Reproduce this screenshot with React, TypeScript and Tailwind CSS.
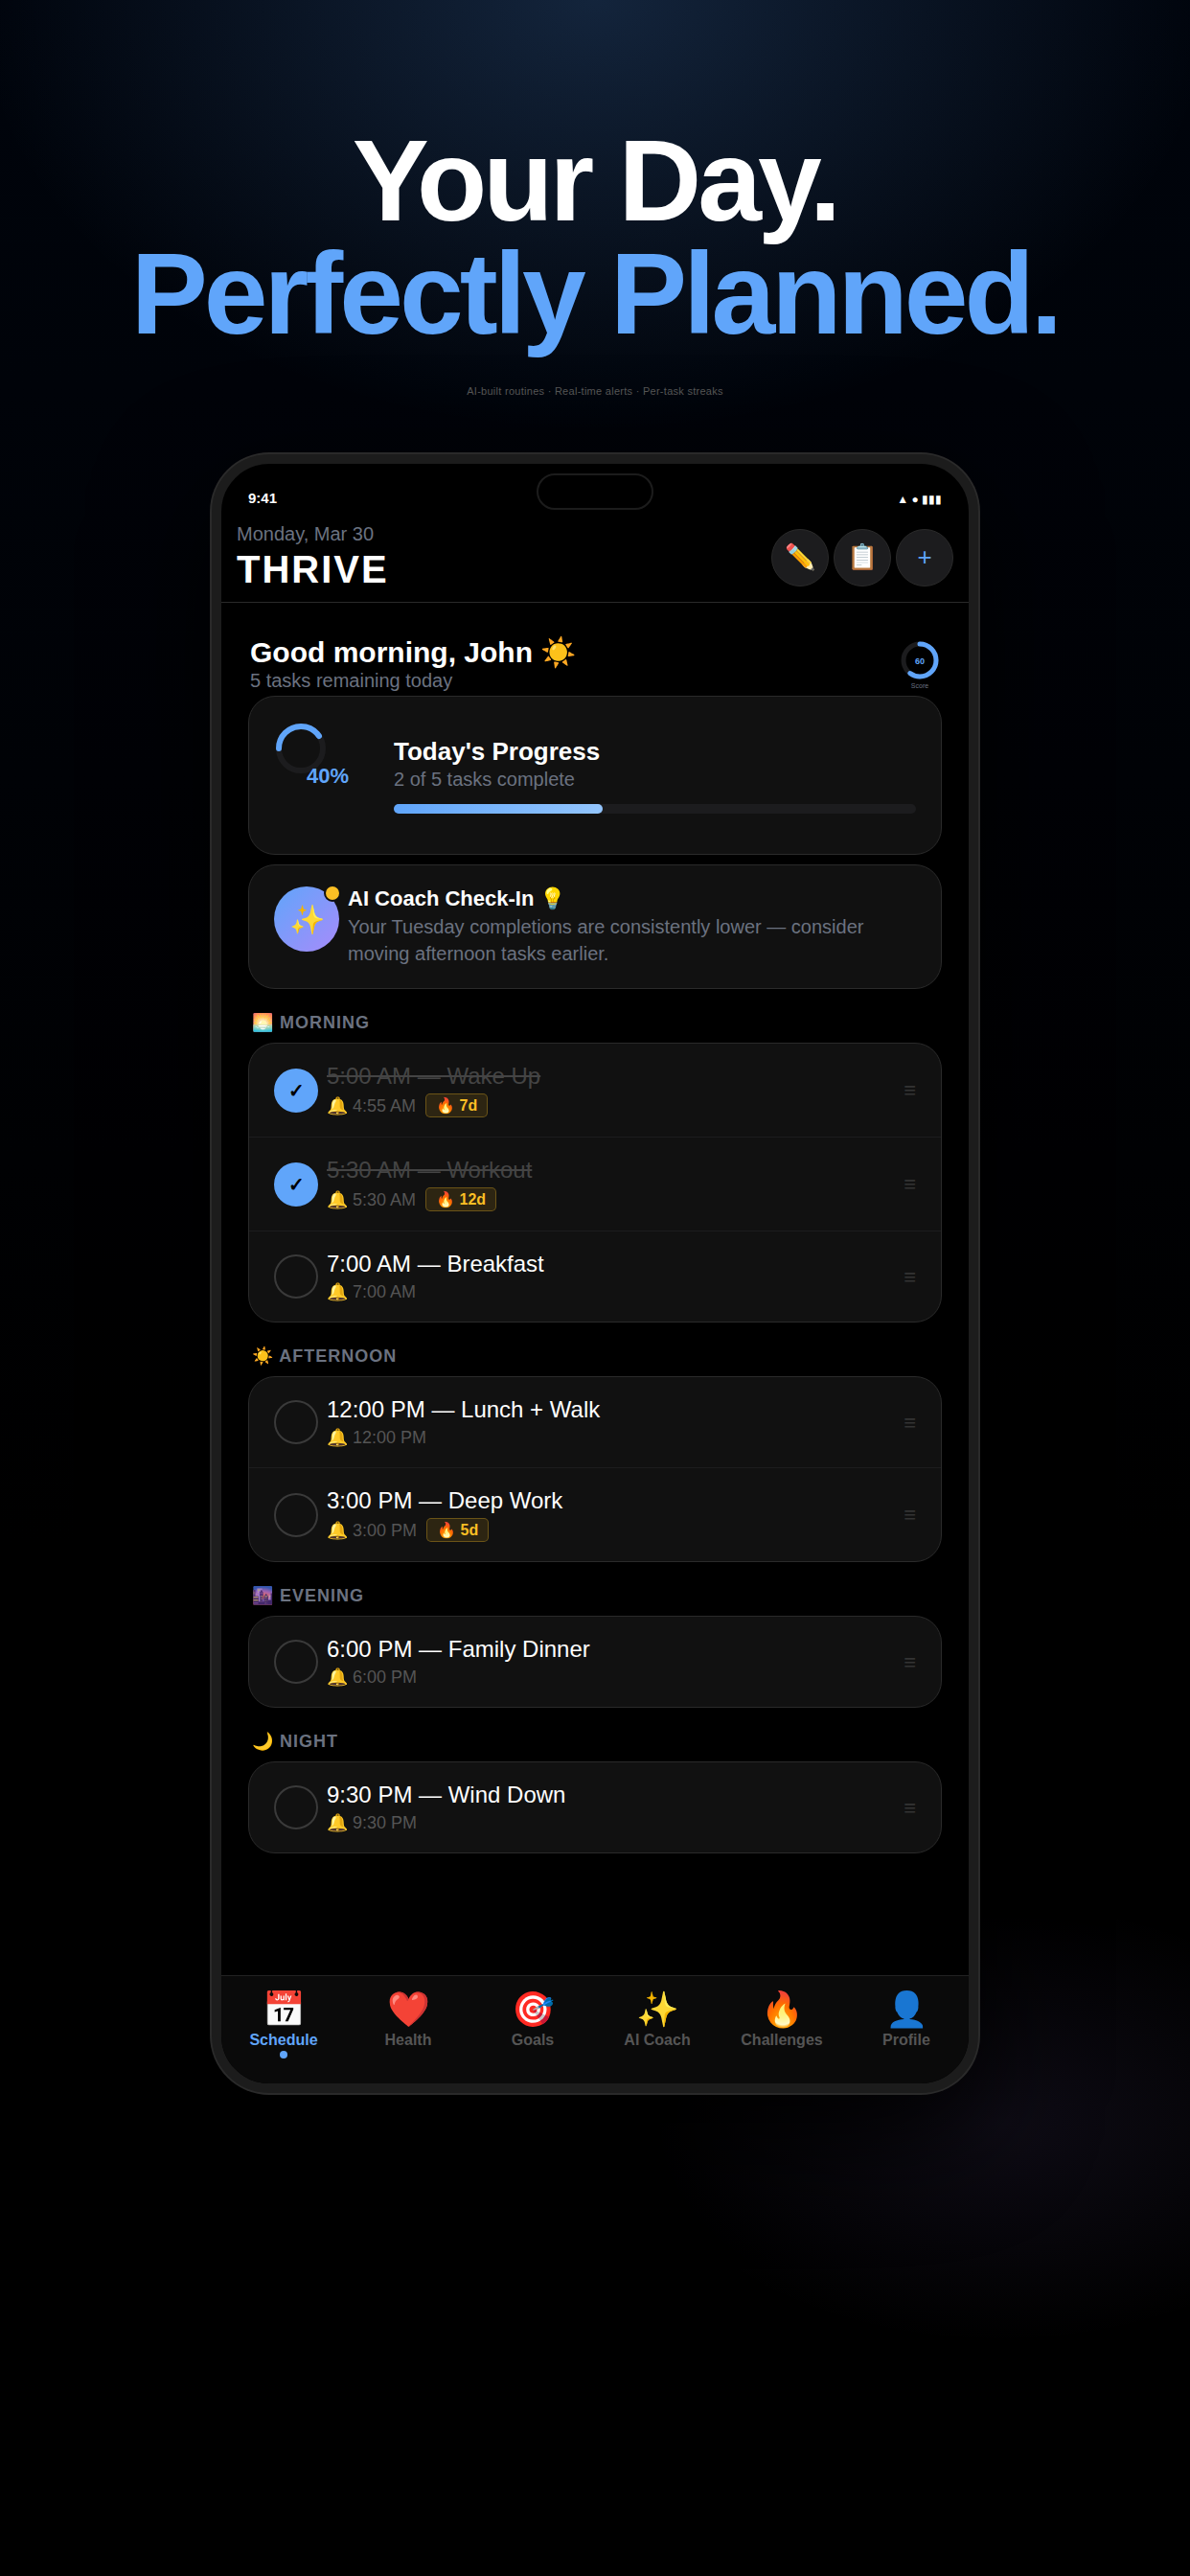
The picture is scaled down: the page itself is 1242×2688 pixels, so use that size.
import type { ReactNode } from 'react'

interface Task {
  id: string
  title: string
  alert: string
  streak?: string
  done?: boolean
}

interface Section {
  emoji: string
  label: string
  tasks: Task[]
}

const sections: Section[] = [
  {
    emoji: '🌅',
    label: 'MORNING',
    tasks: [
      { id: 'wake', title: '5:00 AM — Wake Up', alert: '4:55 AM', streak: '7d', done: true },
      { id: 'workout', title: '5:30 AM — Workout', alert: '5:30 AM', streak: '12d', done: true },
      { id: 'breakfast', title: '7:00 AM — Breakfast', alert: '7:00 AM' },
    ],
  },
  {
    emoji: '☀️',
    label: 'AFTERNOON',
    tasks: [
      { id: 'lunch', title: '12:00 PM — Lunch + Walk', alert: '12:00 PM' },
      { id: 'deep-work', title: '3:00 PM — Deep Work', alert: '3:00 PM', streak: '5d' },
    ],
  },
  {
    emoji: '🌆',
    label: 'EVENING',
    tasks: [{ id: 'dinner', title: '6:00 PM — Family Dinner', alert: '6:00 PM' }],
  },
  {
    emoji: '🌙',
    label: 'NIGHT',
    tasks: [{ id: 'wind-down', title: '9:30 PM — Wind Down', alert: '9:30 PM' }],
  },
]

const tabs = [
  { emoji: '📅', label: 'Schedule' },
  { emoji: '❤️', label: 'Health' },
  { emoji: '🎯', label: 'Goals' },
  { emoji: '✨', label: 'AI Coach' },
  { emoji: '🔥', label: 'Challenges' },
  { emoji: '👤', label: 'Profile' },
]

function Card({ className, children }: { className: string; children: ReactNode }) {
  return (
    <div className={`rounded-[28px] border border-[#2a2a2a] bg-[#111111] ${className}`}>{children}</div>
  )
}

function RoundButton({ label, children }: { label: string; children: ReactNode }) {
  return (
    <button
      aria-label={label}
      className="flex size-[60px] items-center justify-center rounded-full border border-[#2a2a2a] bg-[#1c1c1e] text-[26px] text-[#60a5fa]"
    >
      {children}
    </button>
  )
}

function ScoreRing() {
  return (
    <svg width="42" height="54" viewBox="0 0 42 54" className="shrink-0">
      <circle cx="21" cy="21" r="17" fill="none" stroke="#1c1c1e" strokeWidth="5" />
      <circle
        cx="21"
        cy="21"
        r="17"
        fill="none"
        stroke="#60a5fa"
        strokeWidth="5"
        strokeLinecap="round"
        strokeDasharray="64 107"
        transform="rotate(-90 21 21)"
      />
      <text x="21" y="25" textAnchor="middle" fontSize="9" fontWeight="700" fill="#60a5fa">
        60
      </text>
      <text x="21" y="50" textAnchor="middle" fontSize="7" fill="#6b7280">
        Score
      </text>
    </svg>
  )
}

function TaskRow({ task }: { task: Task }) {
  return (
    <li className="flex items-center border-b border-[#1c1c1e] px-[26px] py-5 last:border-b-0">
      <label htmlFor={task.id} className="relative flex size-[46px] shrink-0">
        <input
          id={task.id}
          type="checkbox"
          defaultChecked={task.done}
          aria-label={task.title}
          className="peer size-[46px] appearance-none rounded-full border-2 border-[#3a3a3a] checked:border-[#60a5fa] checked:bg-[#60a5fa]"
        />
        <span className="absolute inset-0 hidden items-center justify-center text-[20px] font-bold text-black peer-checked:flex">
          ✓
        </span>
      </label>
      <div className="ml-[9px] flex-1">
        <p className={`text-[24px] leading-7 ${task.done ? 'text-[#444444] line-through' : 'text-white'}`}>
          {task.title}
        </p>
        <div className="mt-1 flex items-center gap-[10px]">
          <span className="text-[18px] leading-[22px] text-[#555555]">🔔 {task.alert}</span>
          {task.streak && (
            <span className="rounded-[5px] border border-[#fbbf24]/30 bg-[#fbbf24]/12 px-[10px] py-[2px] text-[16px] leading-[19px] font-bold text-[#fbbf24]">
              🔥 {task.streak}
            </span>
          )}
        </div>
      </div>
      <span className="text-[22px] text-[#333333]">≡</span>
    </li>
  )
}

export default function App() {
  return (
    <main className="min-h-screen bg-black bg-[radial-gradient(ellipse_52%_450px_at_50%_0,#60a5fa33,transparent),radial-gradient(ellipse_380px_230px_at_84%_2215px,#a78bfa16,transparent),linear-gradient(#00040c,#000_60%)] pb-[502px] font-['Liberation_Sans',Arial,sans-serif] text-white">
      <header className="pt-[129px] text-center">
        <h1 className="text-[120px] leading-[118px] font-bold tracking-[-4px]">
          Your Day.
          <br />
          <span className="text-[#60a5fa]">Perfectly Planned.</span>
        </h1>
        <p className="mt-[35px] text-[11px] leading-4 tracking-wide text-[#555555]">
          AI-built routines · Real-time alerts · Per-task streaks
        </p>
      </header>

      <div className="mx-auto mt-[58px] flex min-h-[1710px] max-w-[800px] flex-col overflow-hidden rounded-[60px] border-10 border-[#1c1c1c] bg-black shadow-[0_0_0_2px_#2a2a2a,0_40px_120px_#000000e6]">
        <div className="relative flex h-[58px] items-end justify-between px-7 pb-[14px]">
          <span className="text-[15px] leading-[17px] font-bold">9:41</span>
          <div className="absolute top-[10px] left-1/2 h-[38px] w-[122px] -translate-x-1/2 rounded-full border-2 border-[#1c1c1c] bg-black" />
          <span className="text-[12px] leading-[14px]">▲ ● ▮▮▮</span>
        </div>

        <div className="flex items-center justify-between border-b border-[#2a2a2a] px-4 pt-1 pb-[11px]">
          <div>
            <p className="text-[20px] leading-[23px] text-[#6b7280]">Monday, Mar 30</p>
            <p className="mt-[2px] text-[40px] leading-[46px] font-bold tracking-[2px]">THRIVE</p>
          </div>
          <div className="flex gap-[5px]">
            <RoundButton label="Edit">✏️</RoundButton>
            <RoundButton label="Routines">📋</RoundButton>
            <RoundButton label="Add task">+</RoundButton>
          </div>
        </div>

        <div className="px-7 pt-[34px]">
          <div className="flex min-h-[63px] items-center justify-between px-[2px]">
            <div className="self-start">
              <h2 className="text-[30px] leading-[35px] font-bold">Good morning, John ☀️</h2>
              <p className="mt-px text-[20px] leading-[23px] text-[#6b7280]">5 tasks remaining today</p>
            </div>
            <ScoreRing />
          </div>

          <Card className="flex items-center gap-[13px] p-[26px]">
            <div className="relative size-[112px] shrink-0">
              <svg width="56" height="56" viewBox="0 0 56 56">
                <circle cx="28" cy="28" r="23" fill="none" stroke="#1c1c1e" strokeWidth="6" />
                <circle
                  cx="28"
                  cy="28"
                  r="23"
                  fill="none"
                  stroke="#60a5fa"
                  strokeWidth="6"
                  strokeLinecap="round"
                  strokeDasharray="58 145"
                  transform="rotate(180 28 28)"
                />
              </svg>
              <span className="absolute inset-0 flex items-center justify-center text-[22px] font-bold text-[#60a5fa]">
                40%
              </span>
            </div>
            <div className="flex-1">
              <h3 className="text-[26px] leading-[30px] font-bold">Today's Progress</h3>
              <p className="mt-[3px] text-[20px] leading-[23px] text-[#6b7280]">2 of 5 tasks complete</p>
              <div className="mt-[14px] h-[10px] rounded-full bg-[#1c1c1e]">
                <div className="h-full w-2/5 rounded-full bg-linear-to-r from-[#60a5fa] to-[#93c5fd]" />
              </div>
            </div>
          </Card>

          <Card className="mt-[10px] flex items-start px-[26px] py-[22px]">
            <div className="relative flex size-[68px] shrink-0 items-center justify-center rounded-full bg-[linear-gradient(135deg,#60a5fa,#a78bfa)] text-[30px]">
              ✨
              <span className="absolute -top-[2px] -right-[2px] size-[18px] rounded-full border-2 border-[#111111] bg-[#fbbf24]" />
            </div>
            <div className="ml-[9px]">
              <h3 className="text-[22px] leading-[25px] font-bold">AI Coach Check-In 💡</h3>
              <p className="mt-[3px] text-[20px] leading-7 text-[#6b7280]">
                Your Tuesday completions are consistently lower — consider moving afternoon tasks earlier.
              </p>
            </div>
          </Card>

          {sections.map((section) => (
            <section key={section.label} className="mt-6">
              <h4 className="mb-[10px] px-1 text-[18px] leading-[22px] font-bold tracking-[1px] text-[#6b7280]">
                {section.emoji} {section.label}
              </h4>
              <Card className="overflow-hidden">
                <ul>
                  {section.tasks.map((task) => (
                    <TaskRow key={task.id} task={task} />
                  ))}
                </ul>
              </Card>
            </section>
          ))}
        </div>

        <nav className="mt-auto grid h-[113px] grid-cols-6 border-t border-[#222222] bg-[#0a0a0a] pt-3">
          {tabs.map((tab, i) => (
            <a
              key={tab.label}
              href="#"
              className={`flex flex-col items-center text-[16px] leading-[18px] font-bold ${i === 0 ? 'text-[#60a5fa]' : 'text-[#555555]'}`}
            >
              <span className="text-[36px] leading-[46px] font-normal">{tab.emoji}</span>
              {tab.label}
              {i === 0 && <span className="mt-[2px] size-2 rounded-full bg-[#60a5fa]" />}
            </a>
          ))}
        </nav>
      </div>
    </main>
  )
}
